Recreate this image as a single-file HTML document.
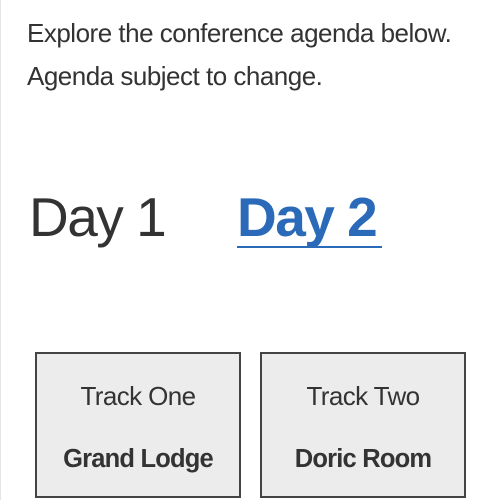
<!DOCTYPE html>
<html><head><style>
body{margin:0;width:500px;height:500px;background:#fff;position:relative;overflow:hidden;font-family:"Liberation Sans",sans-serif;color:#333;border-left:1px solid #e4e4e4;box-sizing:border-box}
.p{position:absolute;left:26px;font-size:26px;letter-spacing:-0.5px;white-space:nowrap;line-height:1}
.d{position:absolute;top:190px;font-size:55px;line-height:1;white-space:nowrap;letter-spacing:-1.5px}
.box{position:absolute;top:352px;width:202px;height:142px;border:2px solid #444;background:#ececec;text-align:center}
.t{position:absolute;left:0;right:0;top:27px;font-size:26px;letter-spacing:-0.6px;color:#333}
.r{position:absolute;left:0;right:0;top:91px;font-size:25.5px;font-weight:bold;letter-spacing:-0.8px;color:#333}
</style></head><body>
<div class="p" style="top:20px">Explore the conference agenda below.</div>
<div class="p" style="top:63px">Agenda subject to change.</div>
<div class="d" style="left:28px;color:#333">Day 1</div>
<div class="d" style="left:236px;color:#2a6ab8;font-weight:bold">Day 2</div>
<div style="position:absolute;left:236px;top:246px;width:145px;height:2px;background:#2a6ab8"></div>
<div class="box" style="left:34px"><div class="t">Track One</div><div class="r">Grand Lodge</div></div>
<div class="box" style="left:259px"><div class="t">Track Two</div><div class="r">Doric Room</div></div>
</body></html>
